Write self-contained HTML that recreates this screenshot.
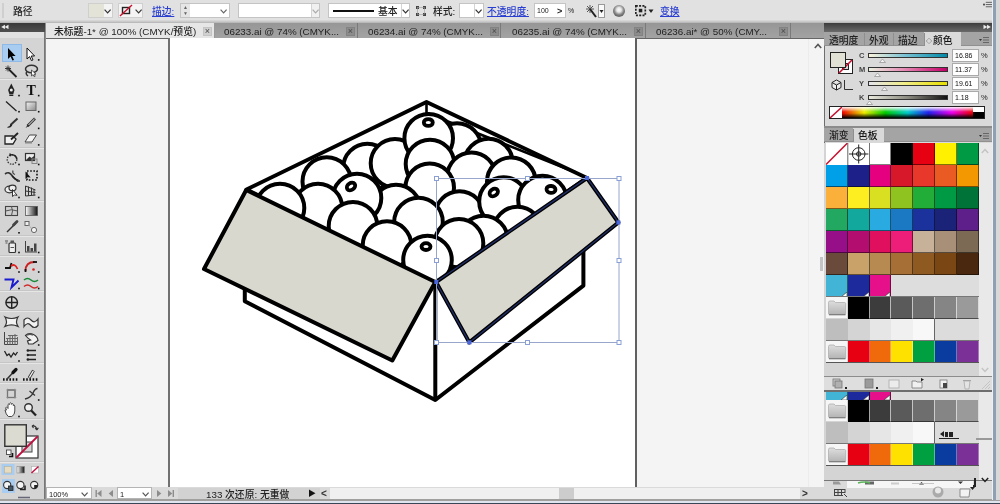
<!DOCTYPE html><html><head><meta charset="utf-8"><title>Illustrator</title><style>
*{box-sizing:border-box;margin:0;padding:0}
html,body{width:1000px;height:504px;overflow:hidden;background:#d4d4d4}
.t,.x,.tab span{will-change:transform}
body{position:relative;font-family:"Liberation Sans","Noto Sans CJK SC",sans-serif;font-size:11px;color:#222;font-weight:500}
.a{position:absolute}
.t{position:absolute;white-space:nowrap;line-height:1}
.lnk{color:#2a3fd0;text-decoration:underline}
.box{position:absolute;background:#fff;border:1px solid #c4c4c4}
.tab{position:absolute;top:23px;height:15px;background:linear-gradient(#969696,#a3a3a3);border-right:1px solid #7a7a7a;color:#222;font-size:9.8px;line-height:18px;white-space:nowrap}
.tab span{position:absolute;top:0}
.x{position:absolute;top:4px;font-weight:400;width:9px;height:9px;background:#8c8c8c;border:1px solid #828282;font-size:9px;line-height:7px;text-align:center;color:#4a4a4a}
.sw{position:absolute;width:22px;height:22px;border:1px solid rgba(0,0,0,.55)}
</style></head><body>
<div class="a" style="left:0;top:0;width:1000px;height:21px;background:#e1e1e1"></div>
<div class="a" style="left:0;top:20px;width:1000px;height:4px;background:linear-gradient(#dcdcdc,#c4c4c4 50%,#9c9c9c)"></div>
<div class="a" style="left:2px;top:3px;width:2px;height:15px;background:#cfcfcf"></div>
<div class="t" style="left:13px;top:7px;font-size:9.8px;color:#222">路径</div>
<div class="box" style="left:88px;top:3px;width:25px;height:15px;border-color:#cfcfcf;background:#f4f4f4"></div>
<div class="a" style="left:89px;top:4px;width:15px;height:13px;background:#e3e3d8"></div>
<svg class="a" style="left:104.4px;top:8.8px" width="8" height="5"><path d="M0.6 0.6 L3.6 3.8 L6.6 0.6" fill="none" stroke="#333" stroke-width="1.2"/></svg>
<div class="box" style="left:118px;top:3px;width:25px;height:15px;border-color:#cfcfcf;background:#f4f4f4"></div>
<svg class="a" style="left:119px;top:4px" width="15" height="13"><rect x="3.5" y="3.5" width="7" height="6" fill="none" stroke="#222" stroke-width="1.4"/><line x1="1" y1="12" x2="13" y2="1" stroke="#c8102e" stroke-width="1.4"/></svg>
<svg class="a" style="left:134.6px;top:8.8px" width="8" height="5"><path d="M0.6 0.6 L3.6 3.8 L6.6 0.6" fill="none" stroke="#333" stroke-width="1.2"/></svg>
<div class="t lnk" style="left:152px;top:6.5px;font-size:9.8px">描边:</div>
<div class="box" style="left:180px;top:3px;width:50px;height:15px"></div>
<div class="a" style="left:181px;top:4px;width:9px;height:13px;background:#e6e6e6"></div>
<div class="t" style="left:183px;top:4px;font-size:5px;line-height:6px;color:#666">&#9650;<br>&#9660;</div>
<svg class="a" style="left:220.1px;top:8.8px" width="8" height="5"><path d="M0.6 0.6 L3.6 3.8 L6.6 0.6" fill="none" stroke="#666" stroke-width="1.2"/></svg>
<div class="box" style="left:238px;top:3px;width:82px;height:15px"></div>
<div class="a" style="left:311px;top:4px;width:8px;height:13px;background:#f0f0f0;border-left:1px solid #d4d4d4"></div>
<svg class="a" style="left:311.9px;top:8.8px" width="8" height="5"><path d="M0.6 0.6 L3.6 3.8 L6.6 0.6" fill="none" stroke="#aaa" stroke-width="1.2"/></svg>
<div class="box" style="left:328px;top:3px;width:82px;height:15px"></div>
<div class="a" style="left:333px;top:10px;width:41px;height:2px;background:#111"></div>
<div class="t" style="left:378px;top:6.5px;font-size:9.8px">基本</div>
<div class="a" style="left:401px;top:4px;width:1px;height:13px;background:#d4d4d4"></div>
<svg class="a" style="left:401.9px;top:8.8px" width="8" height="5"><path d="M0.6 0.6 L3.6 3.8 L6.6 0.6" fill="none" stroke="#333" stroke-width="1.2"/></svg>
<svg class="a" style="left:416px;top:6px" width="10" height="10"><g fill="#444"><rect x="0" y="0" width="3" height="3"/><rect x="7" y="0" width="3" height="3"/><rect x="0" y="7" width="3" height="3"/><rect x="7" y="7" width="3" height="3"/></g><rect x="1.5" y="1.5" width="7" height="7" fill="none" stroke="#999" stroke-width=".6"/></svg>
<div class="t" style="left:433px;top:6.5px;font-size:9.8px">样式:</div>
<div class="box" style="left:459px;top:3px;width:25px;height:15px"></div>
<div class="a" style="left:474px;top:4px;width:1px;height:13px;background:#d4d4d4"></div>
<svg class="a" style="left:475.1px;top:8.8px" width="8" height="5"><path d="M0.6 0.6 L3.6 3.8 L6.6 0.6" fill="none" stroke="#333" stroke-width="1.2"/></svg>
<div class="t lnk" style="left:487px;top:6.5px;font-size:9.8px">不透明度:</div>
<div class="box" style="left:534px;top:3px;width:32px;height:15px"></div>
<div class="t" style="left:537px;top:7px;font-size:7px">100</div>
<div class="t" style="left:557px;top:6.5px;font-size:9px;font-weight:bold">&gt;</div>
<div class="t" style="left:568px;top:7px;font-size:7px">%</div>
<svg class="a" style="left:584px;top:3px" width="22" height="16"><g stroke="#555" stroke-width="1"><line x1="6" y1="2" x2="6" y2="10"/><line x1="2" y1="6" x2="10" y2="6"/><line x1="3" y1="3" x2="9" y2="9"/><line x1="9" y1="3" x2="3" y2="9"/></g><line x1="6" y1="6" x2="12" y2="14" stroke="#222" stroke-width="2"/><rect x="14.5" y="1.5" width="6" height="13" fill="#fafafa" stroke="#999"/><path d="M15.5 7 h4 l-2 3z" fill="#222"/></svg>
<div class="a" style="left:613px;top:5px;width:12px;height:12px;border-radius:6px;background:radial-gradient(circle at 50% 40%,#fafafa 0,#e4e4e4 25%,#8a8a8a 50%,#666 68%,#b4b4b4 100%)"></div>
<svg class="a" style="left:635px;top:5px" width="22" height="12"><rect x="0.8" y="0.8" width="9.500" height="9.500" fill="#ddd" stroke="#222" stroke-dasharray="2 1.300" stroke-width="1.700"/><rect x="3.800" y="3.800" width="3.500" height="3.500" fill="#222"/><path d="M13.5 4.5 h5 l-2.5 3.5z" fill="#222"/></svg>
<div class="t lnk" style="left:660px;top:6.5px;font-size:9.8px">变换</div>
<svg class="a" style="left:983px;top:1px" width="10" height="8" viewBox="0 0 11 9"><rect x="0" y="3" width="2" height="2" fill="#444"/><g stroke="#555" stroke-width="1"><line x1="3" y1="1.5" x2="10" y2="1.5"/><line x1="3" y1="4" x2="10" y2="4"/><line x1="3" y1="6.5" x2="10" y2="6.5"/></g></svg>
<div class="a" style="left:45px;top:23px;width:779px;height:16px;background:linear-gradient(#969696,#a3a3a3);border-bottom:1px solid #666"></div>
<div class="tab" style="left:46px;width:169px;background:#e6e6e6;height:15px;color:#222;border-right:1px solid #999;"><span style="left:8px">未标题-1* @ 100% (CMYK/预览)</span><div class="x" style="left:157px;background:#d0d0d0;border-color:#c4c4c4;">&#215;</div></div>
<div class="tab" style="left:215px;width:143px;"><span style="left:9px">06233.ai @ 74% (CMYK...</span><div class="x" style="left:131px;">&#215;</div></div>
<div class="tab" style="left:358px;width:143px;"><span style="left:10px">06234.ai @ 74% (CMYK...</span><div class="x" style="left:132px;">&#215;</div></div>
<div class="tab" style="left:501px;width:145px;"><span style="left:11px">06235.ai @ 74% (CMYK...</span><div class="x" style="left:133px;">&#215;</div></div>
<div class="tab" style="left:646px;width:145px;"><span style="left:10px">06236.ai* @ 50% (CMY...</span><div class="x" style="left:133px;">&#215;</div></div>
<div class="a" style="left:46px;top:39px;width:762px;height:448px;background:#f4f4f4"></div>
<div class="a" style="left:168px;top:38px;width:469px;height:449px;background:#fff;border-left:2px solid #707070;border-right:2px solid #606060"></div>
<div class="a" style="left:808px;top:39px;width:16px;height:448px;background:#f4f4f4;border-left:1px solid #ececec"></div>
<svg class="a" style="left:813.500px;top:43px" width="8" height="6"><path d="M0.800 5 L4 1.500 L7.200 5" fill="none" stroke="#555" stroke-width="1.600"/></svg>
<div class="a" style="left:820px;top:257px;width:3px;height:14px;background:#c4c4c4"></div>
<svg class="a" style="left:0;top:0" width="1000" height="504" viewBox="0 0 1000 504">
<g fill="none" stroke="#000" stroke-width="4.0" stroke-linejoin="round" stroke-linecap="butt">
<path d="M246.5 189.5 L426.5 102 L587 178 L435 283 Z" fill="#fff"/>
<path d="M426.5 102 V113 L576 172.5" stroke-width="2.6"/>
<path d="M244.8 286 V301.3 L435.3 400 L583.4 285.6 V250 L435 283 Z" fill="#fff"/>
<g fill="#fff">
<circle cx="457" cy="147.5" r="24.3"/>
<circle cx="367.4" cy="168" r="24.3"/>
<circle cx="395" cy="163.3" r="24.3"/>
<circle cx="428.7" cy="138.2" r="24.3"/>
<ellipse cx="428.3" cy="122.5" rx="4.5" ry="3.4" stroke-width="3.8" transform="rotate(0 428.3 122.5)"/>
<circle cx="430" cy="164" r="24.3"/>
<circle cx="488.5" cy="163" r="24.3"/>
<circle cx="471.5" cy="176.8" r="24.3"/>
<circle cx="511.3" cy="181.7" r="24.3"/>
<circle cx="326.8" cy="181.6" r="24.3"/>
<circle cx="429.7" cy="187.8" r="24.3"/>
<circle cx="396" cy="209" r="24.3"/>
<circle cx="357" cy="198" r="24.3"/>
<ellipse cx="351" cy="186.5" rx="4.5" ry="3.4" stroke-width="3.8" transform="rotate(-35 351 186.5)"/>
<circle cx="318" cy="208" r="24.3"/>
<circle cx="280" cy="208" r="24.3"/>
<circle cx="459.5" cy="215.5" r="24.3"/>
<circle cx="503.5" cy="201.5" r="24.3"/>
<ellipse cx="493.75" cy="192.5" rx="4.5" ry="3.4" stroke-width="3.8" transform="rotate(-35 493.75 192.5)"/>
<circle cx="542.5" cy="200" r="24.3"/>
<ellipse cx="551" cy="189.4" rx="4.5" ry="3.4" stroke-width="3.8" transform="rotate(5 551 189.4)"/>
<circle cx="418.5" cy="222" r="24.3"/>
<circle cx="353" cy="226.2" r="24.3"/>
<circle cx="517.5" cy="231" r="24.3"/>
<circle cx="483.5" cy="240" r="24.3"/>
<circle cx="459" cy="243.3" r="24.3"/>
<circle cx="387" cy="245.5" r="24.3"/>
<circle cx="427.5" cy="260" r="24.3"/>
<ellipse cx="426" cy="246.6" rx="4.5" ry="3.4" stroke-width="3.8" transform="rotate(0 426 246.6)"/>
</g>
<path d="M435.3 283 V400"/>
<path d="M246.2 190 L435.3 282 L392.3 360.5 L204 269 Z" fill="#d9d8ce"/>
<path d="M436 282 L587 178 L618.4 222.5 L469.3 342.4 Z" fill="#d9d8ce"/>
</g>
<g fill="none" stroke="#98a6cc" stroke-width="1">
<path d="M436 282 L587 178 L618.4 222.5 L469.3 342.4 Z" stroke="#2c3f8c" stroke-width="1.3" stroke-opacity=".75"/>
<rect x="436.5" y="178.5" width="182.5" height="164" stroke="#98a6cc"/>
</g>
<g fill="#fff" stroke="#8a9fd6" stroke-width="1">
<rect x="434.5" y="176.5" width="4" height="4"/>
<rect x="525.5" y="176.5" width="4" height="4"/>
<rect x="617" y="176.5" width="4" height="4"/>
<rect x="434.5" y="258.5" width="4" height="4"/>
<rect x="617" y="258.5" width="4" height="4"/>
<rect x="434.5" y="340.5" width="4" height="4"/>
<rect x="525.5" y="340.5" width="4" height="4"/>
<rect x="617" y="340.5" width="4" height="4"/>
</g>
<g fill="#4a66dc">
<rect x="434.3" y="280" width="4" height="4"/>
<rect x="585" y="176" width="4" height="4"/>
<rect x="616.4" y="220.5" width="4" height="4"/>
<rect x="467.3" y="340.4" width="4" height="4"/>
</g>
</svg>
<div class="a" style="left:46px;top:487px;width:778px;height:12px;background:#dadada"></div>
<div class="box" style="left:46px;top:487px;width:46px;height:12px;border-color:#b4b4b4"></div>
<div class="t" style="left:49px;top:491px;font-size:7.5px">100%</div>
<svg class="a" style="left:81.4px;top:492.3px" width="8" height="5"><path d="M0.6 0.6 L3.6 3.8 L6.6 0.6" fill="none" stroke="#555" stroke-width="1.2"/></svg>
<svg class="a" style="left:92px;top:488px" width="86" height="11"><g fill="#8c8c8c"><rect x="3.500" y="2" width="1.400" height="7"/><path d="M9.500 2 v7 l-4.300 -3.500z"/><path d="M21 2 v7 l-4.300 -3.500z"/><path d="M65 2 v7 l4.300 -3.500z"/><path d="M76 2 v7 l4.300 -3.500z"/><rect x="80.600" y="2" width="1.400" height="7"/></g></svg>
<div class="box" style="left:117px;top:487px;width:35px;height:12px;border-color:#b4b4b4"></div>
<div class="t" style="left:120px;top:491px;font-size:7.5px">1</div>
<svg class="a" style="left:142.4px;top:492.3px" width="8" height="5"><path d="M0.6 0.6 L3.6 3.8 L6.6 0.6" fill="none" stroke="#555" stroke-width="1.2"/></svg>
<div class="a" style="left:178px;top:488px;width:142px;height:11px;background:#d2d2d2"></div>
<div class="t" style="left:206px;top:489.5px;font-size:9.8px;color:#222;z-index:5">133 次还原: 无重做</div>
<div class="t" style="left:308px;top:490px;font-size:8px;color:#111">&#9654;</div>
<div class="t" style="left:321px;top:489px;font-size:10px;color:#333;font-weight:bold">&lt;</div>
<div class="a" style="left:330px;top:488px;width:470px;height:11px;background:#f0f0f0"></div>
<div class="a" style="left:559px;top:488px;width:15px;height:11px;background:#cdcdcd"></div>
<div class="t" style="left:802px;top:489px;font-size:10px;color:#333;font-weight:bold">&gt;</div>
<div class="a" style="left:0;top:24px;width:44px;height:476px;background:#d4d4d4"></div>
<div class="a" style="left:44px;top:23px;width:2px;height:477px;background:linear-gradient(90deg,#6a6a6a,#9a9a9a)"></div>
<div class="a" style="left:0;top:23px;width:45px;height:9px;background:linear-gradient(#3a3a3a,#505050)"></div>
<div class="t" style="left:1px;top:25px;font-size:4.5px;color:#eee;letter-spacing:-1px">&#9664;&#9664;</div>
<div class="a" style="left:0;top:32px;width:44px;height:6px;background:#e2e2e2"></div>
<div class="a" style="left:2px;top:44px;width:20px;height:18px;background:#a9cdf0;border:1px solid #8fb9e6"></div>
<div class="a" style="left:0;top:79px;width:44px;height:1px;background:#e6e6e6"></div>
<div class="a" style="left:0;top:78px;width:44px;height:1px;background:#c6c6c6"></div>
<div class="a" style="left:0;top:148px;width:44px;height:1px;background:#e6e6e6"></div>
<div class="a" style="left:0;top:147px;width:44px;height:1px;background:#c6c6c6"></div>
<div class="a" style="left:0;top:201px;width:44px;height:1px;background:#e6e6e6"></div>
<div class="a" style="left:0;top:200px;width:44px;height:1px;background:#c6c6c6"></div>
<div class="a" style="left:0;top:236px;width:44px;height:1px;background:#e6e6e6"></div>
<div class="a" style="left:0;top:235px;width:44px;height:1px;background:#c6c6c6"></div>
<div class="a" style="left:0;top:256px;width:44px;height:1px;background:#e6e6e6"></div>
<div class="a" style="left:0;top:255px;width:44px;height:1px;background:#c6c6c6"></div>
<div class="a" style="left:0;top:291px;width:44px;height:1px;background:#e6e6e6"></div>
<div class="a" style="left:0;top:290px;width:44px;height:1px;background:#c6c6c6"></div>
<div class="a" style="left:0;top:311px;width:44px;height:1px;background:#e6e6e6"></div>
<div class="a" style="left:0;top:310px;width:44px;height:1px;background:#c6c6c6"></div>
<div class="a" style="left:0;top:363px;width:44px;height:1px;background:#e6e6e6"></div>
<div class="a" style="left:0;top:362px;width:44px;height:1px;background:#c6c6c6"></div>
<div class="a" style="left:0;top:383px;width:44px;height:1px;background:#e6e6e6"></div>
<div class="a" style="left:0;top:382px;width:44px;height:1px;background:#c6c6c6"></div>
<div class="a" style="left:0;top:419px;width:44px;height:1px;background:#e6e6e6"></div>
<div class="a" style="left:0;top:418px;width:44px;height:1px;background:#c6c6c6"></div>
<div class="a" style="left:0;top:462px;width:44px;height:1px;background:#e6e6e6"></div>
<div class="a" style="left:0;top:461px;width:44px;height:1px;background:#c6c6c6"></div>
<svg class="a" style="left:0;top:0" width="46" height="504" viewBox="0 0 46 504">
<g fill="#111">
<rect x="37.9" y="59.1" width="1.6" height="1.6"/>
<rect x="18.2" y="94.8" width="1.6" height="1.6"/>
<rect x="37.9" y="94.8" width="1.6" height="1.6"/>
<rect x="18.2" y="110.9" width="1.6" height="1.6"/>
<rect x="37.9" y="110.9" width="1.6" height="1.6"/>
<rect x="37.9" y="127.6" width="1.6" height="1.6"/>
<rect x="37.9" y="144.1" width="1.6" height="1.6"/>
<rect x="18.2" y="163.7" width="1.6" height="1.6"/>
<rect x="37.9" y="163.7" width="1.6" height="1.6"/>
<rect x="18.2" y="180.2" width="1.6" height="1.6"/>
<rect x="18.2" y="196.7" width="1.6" height="1.6"/>
<rect x="37.9" y="196.7" width="1.6" height="1.6"/>
<rect x="18.2" y="232.0" width="1.6" height="1.6"/>
<rect x="18.2" y="251.7" width="1.6" height="1.6"/>
<rect x="37.9" y="251.7" width="1.6" height="1.6"/>
<rect x="18.2" y="271.2" width="1.6" height="1.6"/>
<rect x="37.9" y="271.2" width="1.6" height="1.6"/>
<rect x="18.2" y="287.7" width="1.6" height="1.6"/>
<rect x="37.9" y="287.7" width="1.6" height="1.6"/>
<rect x="37.9" y="344.2" width="1.6" height="1.6"/>
<rect x="18.2" y="360.2" width="1.6" height="1.6"/>
<rect x="37.9" y="399.2" width="1.6" height="1.6"/>
<rect x="18.2" y="415.7" width="1.6" height="1.6"/>
</g>
<path d="M8 48 L8 59 L10.6 56.6 L12.4 60.6 L14 59.9 L12.2 56 L15.6 56 Z" fill="#000"/>
<path d="M27 48 L27 59 L29.6 56.6 L31.4 60.6 L33 59.9 L31.2 56 L34.6 56 Z" fill="#fff" stroke="#111" stroke-width="1"/>
<g stroke="#333" stroke-width="1" fill="none"><path d="M8 65.500 v6 M5 68.500 h6 M6 66.500 l4 4 M10 66.500 l-4 4"/><path d="M9 69.500 L16.500 77" stroke-width="1.800" stroke="#222"/></g>
<g fill="none" stroke="#333" stroke-width="1.500"><ellipse cx="31.500" cy="69" rx="6" ry="3.800"/><path d="M27 71.500 q-2 2.500 1 4.500"/></g><path d="M31.500 70 v6 l1.500 -1.300 l1.200 2 l1 -0.500 l-1.200 -2 h2z" fill="#fff" stroke="#222" stroke-width=".7"/>
<path d="M11.300 83.500 L14.500 90 L13.300 94 H9.300 L8.100 90 Z" fill="#222"/><circle cx="11.300" cy="90" r="1.500" fill="#eee"/><rect x="9.300" y="94.500" width="4" height="1.500" fill="#222"/>
<text x="31.200" y="94.500" font-family="Liberation Serif,serif" font-weight="bold" font-size="14" text-anchor="middle" fill="#111">T</text>
<path d="M6 101.500 L16.500 111" stroke="#222" stroke-width="1.300"/>
<defs><linearGradient id="rg" x1="0" y1="0" x2="1" y2="1"><stop offset="0" stop-color="#f4f4f4"/><stop offset="1" stop-color="#8a8a8a"/></linearGradient><linearGradient id="gg" x1="0" y1="0" x2="1" y2="0"><stop offset="0" stop-color="#fff"/><stop offset="1" stop-color="#111"/></linearGradient></defs>
<rect x="26" y="102" width="10" height="8.500" fill="url(#rg)" stroke="#666" stroke-width="1"/>
<path d="M17.500 118.500 L10.500 125" stroke="#333" stroke-width="2"/><path d="M10.800 124 q-1 3 -4 3.300 q3 1.500 5.500 -1.800z" fill="#222"/>
<path d="M35 118.500 L27.500 126" stroke="#333" stroke-width="2.600"/><path d="M34.500 119 L27.800 125.700" stroke="#eee" stroke-width="1"/><path d="M28 124.500 l-2.500 3.500 l3.800 -2.200z" fill="#222"/>
<path d="M5 136 h8 l3 3 l-3 5 h-8z" fill="#f0f0f0" stroke="#222" stroke-width="1.300"/><path d="M18 133 L11 139.500" stroke="#222" stroke-width="1.800"/>
<path d="M29.500 135 h7 l-4.500 7 h-7z" fill="#f4f4f4" stroke="#444" stroke-width="1"/><path d="M25 142 h7 v1.500 h-7z" fill="#888"/>
<circle cx="12" cy="159.500" r="4.800" fill="none" stroke="#333" stroke-width="1.300" stroke-dasharray="1.500 1.200"/><path d="M12 154.700 a4.800 4.800 0 0 1 4.800 4.800" fill="none" stroke="#222" stroke-width="1.500"/><path d="M9.500 153 l3 1.700 l-2.600 2z" fill="#222"/>
<rect x="25.500" y="153.500" width="9" height="7" fill="#eee" stroke="#333" stroke-width="1.200"/><path d="M26 160 l3.500 -3.500 l2 1.500 l2.500 -2 v4z" fill="#333"/><rect x="32" y="159" width="5" height="4.500" fill="none" stroke="#888" stroke-width="1"/>
<path d="M5 174 q4 -3 7 1.500 t6.500 4.500" fill="none" stroke="#333" stroke-width="1.600"/><path d="M13 170.500 q-1 3 2 4" fill="none" stroke="#444" stroke-width="1.200"/><path d="M12 176 L18 181.500" stroke="#222" stroke-width="1.200"/>
<rect x="27" y="171" width="10" height="9" fill="none" stroke="#111" stroke-width="1.600" stroke-dasharray="1.600 1.600"/><path d="M25.500 171.500 v7.500 l2 -1.800 l3.200 0.200z" fill="#111"/>
<g fill="#eee" stroke="#333" stroke-width="1.200"><ellipse cx="9.500" cy="189.500" rx="4.500" ry="3.300"/><ellipse cx="12.500" cy="188" rx="3.500" ry="2.800"/></g><path d="M12.500 189.500 v7 l1.800 -1.500 l2.800 0.300z" fill="#fff" stroke="#222" stroke-width=".9"/>
<g fill="none" stroke="#333" stroke-width="1"><path d="M25.500 186 v10 M28.500 186.500 v9.500 M31.500 187.500 v8 M34 189 v6.500 M25.500 186 L35.500 190 M25.500 191 L35.500 192.500 M25.500 196 L35.500 195"/></g>
<rect x="5.500" y="206.500" width="12" height="9" fill="#cfcfcf" stroke="#444" stroke-width="1.100"/><path d="M5.500 211 q6 -2.500 12 0 M11.500 206.500 q2 4.500 0 9" fill="none" stroke="#555" stroke-width="1"/>
<rect x="25.500" y="206.500" width="12" height="9" fill="url(#gg)" stroke="#555" stroke-width=".8"/>
<path d="M15.500 223.500 L7 232" stroke="#333" stroke-width="1.500"/><path d="M17 221.500 L13.500 225" stroke="#444" stroke-width="2.800" stroke-linecap="round"/>
<rect x="25" y="221.500" width="4" height="4" fill="#eee" stroke="#666" stroke-width="1"/><circle cx="34" cy="230" r="2.600" fill="#f4f4f4" stroke="#666" stroke-width="1"/><path d="M28.500 225.500 L32 228.500" stroke="#999" stroke-width="1" stroke-dasharray="1 1"/>
<rect x="9" y="243" width="6.500" height="9.500" rx="1" fill="#eee" stroke="#333" stroke-width="1.200"/><rect x="10.500" y="240.500" width="3.500" height="2.500" fill="#555"/><path d="M5 241 h3 M5.500 243 h2" stroke="#555" stroke-width="1"/><path d="M10.500 247.500 h3.500" stroke="#555"/>
<g fill="#444"><rect x="25" y="241" width="1" height="11"/><rect x="25" y="251.500" width="12" height="1"/><rect x="27" y="246" width="2.500" height="5.500"/><rect x="30.500" y="248" width="2.500" height="3.500"/><rect x="34" y="243.500" width="2.500" height="8"/></g>
<path d="M5 268 h5 l1.500 -5" fill="none" stroke="#111" stroke-width="1.800"/><path d="M11 266 q4 -3 6.500 3" fill="none" stroke="#d22" stroke-width="1.800"/>
<path d="M25.500 271 q0 -9 9 -9" fill="none" stroke="#c22" stroke-width="1.800"/><path d="M33 262 h4" stroke="#111" stroke-width="1.800"/><path d="M25.500 269 v3" stroke="#111" stroke-width="1.800"/><circle cx="33.500" cy="269.500" r="1.300" fill="#d22"/>
<path d="M4.500 279.500 h9 l-2 8 l7 -7" fill="none" stroke="#1a1ad0" stroke-width="1.900"/>
<path d="M24 280 q3.500 -3 7 0 t7 0" fill="none" stroke="#1a8a3a" stroke-width="1.600"/><path d="M24 286.500 q3.500 -3 7 0 t7 0" fill="none" stroke="#d02a2a" stroke-width="1.600"/>
<g fill="none" stroke="#222" stroke-width="1.400"><circle cx="11.700" cy="302.500" r="5.800"/><path d="M5.900 302.500 h11.600 M11.700 296.700 v11.600"/></g>
<path d="M5 317 q6.500 3 13 0 q-3 4.700 0 9.400 q-6.500 -3 -13 0 q3 -4.700 0 -9.400z" fill="#f2f2f2" stroke="#333" stroke-width="1.200"/>
<path d="M24 320 q3.500 -4 7 0 t7 -1 v6.500 q-3.500 4 -7 0 t-7 1z" fill="#f2f2f2" stroke="#333" stroke-width="1.200"/>
<g stroke="#444" stroke-width="1" fill="none"><path d="M4.500 332 v12.500 h13"/><path d="M7.500 338 v6.500 M10 335 v9.500 M12.500 336 v8.500 M15 334 v10.500 M17.500 337 v7.500 M4.500 341.500 h13 M6 338.500 h11.500 M8 335.500 h9.500" stroke="#666"/></g>
<path d="M25.500 335.500 q3 -3 8 -1 q4 2 4.500 6 l-5 3.500 h-4.500 l-1 -3 l3 -1 q-3 -2 -5 -4.500z" fill="#f2f2f2" stroke="#333" stroke-width="1.200"/><path d="M27 335 q3 -1.500 6 0" stroke="#555" stroke-width="1.500" fill="none"/>
<path d="M4.500 351 l2.500 4.500 l2 -1.500 l2 3 l2.500 -4 l2 2 l2 -3" fill="none" stroke="#222" stroke-width="1.300"/>
<g stroke="#222" stroke-width="1.400"><path d="M28 350.500 h8 M28 355 h8 M28 359.500 h8"/></g><g fill="#222"><circle cx="27.800" cy="350.500" r="1.200"/><circle cx="27.800" cy="355" r="1.200"/><circle cx="27.800" cy="359.500" r="1.200"/></g>
<path d="M14.500 371 L7.500 378.500" stroke="#333" stroke-width="1.500"/><path d="M16 369.500 L13 372.500" stroke="#111" stroke-width="3.200" stroke-linecap="round"/><path d="M3 379.500 h15" stroke="#111" stroke-width="2.600" stroke-dasharray="1.600 1.600"/>
<path d="M33.500 370.500 L29 378" stroke="#333" stroke-width="3"/><path d="M33.300 371 L29.300 377.500" stroke="#f4f4f4" stroke-width="1.400"/><path d="M23 379.500 h15" stroke="#111" stroke-width="2.600" stroke-dasharray="1.600 1.600"/>
<rect x="7.500" y="390" width="7.500" height="7.500" fill="none" stroke="#444" stroke-width="1.200"/><path d="M6 390 h10.500 M6 397.500 h10.500 M7.500 388.500 v10.500 M15 388.500 v10.500" stroke="#999" stroke-width=".6"/>
<path d="M25 399 q6 -1.500 8 -6 t4.500 -4.500" fill="none" stroke="#333" stroke-width="1.400"/><path d="M29.500 391 L35 395.500" stroke="#333" stroke-width="1.200"/>
<path d="M6.500 410 q-2 -3 0 -3 l1.500 1.500 v-4 q1 -1.500 1.700 0 v-1 q1 -1.500 1.800 0 v0.800 q1 -1.300 1.800 0 v1.200 q1.200 -1 1.500 0.500 v5 q0 4 -3 5.500 h-3.500 q-2.500 -2 -3.300 -6.500z" fill="#fafafa" stroke="#444" stroke-width="1"/>
<circle cx="28.500" cy="407.500" r="3.800" fill="#f0f0f0" stroke="#333" stroke-width="1.400"/><path d="M31.300 410.500 L36 415.500" stroke="#222" stroke-width="2.200"/>
<rect x="16" y="436" width="22" height="22" fill="#fff" stroke="#333" stroke-width="1.200"/><rect x="22" y="442" width="10" height="10" fill="#d6d6d6" stroke="#444" stroke-width="1"/><path d="M16.500 457.500 L37.500 436.500" stroke="#c01040" stroke-width="1.800"/>
<rect x="4.800" y="424.800" width="21.500" height="21.500" fill="#dcdbd1" stroke="#333" stroke-width="1.400"/>
<path d="M32 426 q4 -1 5 4 M37 430 l-1.800 -1.800 M37 430 l1.300 -2.200 M32 426 l2 -1 M32 426 l1.500 2" fill="none" stroke="#333" stroke-width="1.200"/>
<rect x="6.500" y="450" width="4.500" height="4.500" fill="#fff" stroke="#333" stroke-width=".8"/><path d="M9 456.500 h3.500 v-3.500" fill="none" stroke="#111" stroke-width="1.600"/>
<rect x="1.500" y="464" width="13" height="11" fill="#a9cdf0"/>
<rect x="4.500" y="466.500" width="7" height="6.500" fill="#e8dcc0" stroke="#b8b8a8" stroke-width=".8"/>
<rect x="17" y="466.500" width="7.500" height="6.500" fill="url(#gg)" stroke="#888" stroke-width=".6"/>
<rect x="31.500" y="466.500" width="7" height="6.500" fill="#fff" stroke="#aaa" stroke-width=".6"/><path d="M31.500 473 L38.500 466.500" stroke="#c01040" stroke-width="1.400"/>
<rect x="2" y="479" width="13" height="14" fill="#a9cdf0"/>
<circle cx="7.2" cy="485" r="3.600" fill="#f4f4f4" stroke="#333" stroke-width="1.100"/>
<circle cx="20.4" cy="485" r="3.600" fill="#f4f4f4" stroke="#333" stroke-width="1.100"/>
<circle cx="34.2" cy="485" r="3.600" fill="#f4f4f4" stroke="#333" stroke-width="1.100"/>
<rect x="8.500" y="486" width="4.500" height="4.500" fill="#456" stroke="#222" stroke-width=".8"/>
<path d="M20 489.500 h5 v-4" fill="none" stroke="#222" stroke-width="1.600"/>
<path d="M34.200 485 h3.600 a3.600 3.600 0 0 1 -3.600 3.600z" fill="#222"/>
<path d="M18 497.500 h12" stroke="#667" stroke-width="1.500"/>
</svg>
<div class="a" style="left:824px;top:24px;width:168px;height:476px;background:#dadada"></div>
<div class="a" style="left:824px;top:23px;width:1px;height:477px;background:#6e6e6e"></div>
<div class="a" style="left:824px;top:23px;width:168px;height:9px;background:linear-gradient(#3c3c3c,#6a6a6a)"></div>
<div class="t" style="left:983px;top:25px;font-size:4.5px;color:#eee;letter-spacing:-1px">&#9654;&#9654;</div>
<div class="a" style="left:824px;top:32px;width:168px;height:14px;background:#a4a4a4;border-bottom:1px solid #909090"></div>
<div class="a" style="left:924px;top:32px;width:37px;height:15px;background:#dadada"></div>
<div class="a" style="left:864px;top:33px;width:1px;height:13px;background:#8f8f8f"></div>
<div class="a" style="left:893px;top:33px;width:1px;height:13px;background:#8f8f8f"></div>
<div class="a" style="left:924px;top:33px;width:1px;height:13px;background:#8f8f8f"></div>
<div class="t" style="left:829px;top:36px;font-size:9.8px;color:#222">透明度</div>
<div class="t" style="left:869px;top:36px;font-size:9.8px;color:#222">外观</div>
<div class="t" style="left:898px;top:36px;font-size:9.8px;color:#222">描边</div>
<div class="t" style="left:926px;top:38px;font-size:6px;color:#222">&#9671;</div>
<div class="t" style="left:933px;top:36px;font-size:9.8px;color:#111">颜色</div>
<svg class="a" style="left:979px;top:36px" width="11" height="8"><path d="M0 3 h3 l-1.5 2z" fill="#333"/><g stroke="#666" stroke-width="1"><line x1="4" y1="1.5" x2="10" y2="1.5"/><line x1="4" y1="4" x2="10" y2="4"/><line x1="4" y1="6.5" x2="10" y2="6.5"/></g></svg>
<div class="a" style="left:838px;top:59px;width:15px;height:15px;background:#fff;border:1px solid #222"></div>
<svg class="a" style="left:838px;top:59px" width="15" height="15"><rect x="4.5" y="4.5" width="6" height="6" fill="#d6d6d6" stroke="#222"/><line x1="1" y1="14" x2="14" y2="1" stroke="#c8102e" stroke-width="1.6"/></svg>
<div class="a" style="left:830px;top:52px;width:16px;height:16px;background:#e2e1d6;border:1px solid #222"></div>
<svg class="a" style="left:830px;top:79px" width="24" height="12"><path d="M2 3.5 L6.5 1 L11 3.5 V8.5 L6.5 11 L2 8.5 Z M2 3.5 L6.5 6 L11 3.5 M6.5 6 V11" fill="#eee" stroke="#222" stroke-width="1"/><path d="M14.5 1 V10.5 H23" fill="none" stroke="#333" stroke-width="1"/></svg>
<div class="t" style="left:859px;top:52px;font-size:7.5px;font-weight:bold;color:#444">C</div>
<div class="a" style="left:868px;top:53px;width:80px;height:5px;background:linear-gradient(90deg,#fbf3dc,#7cc3d4 45%,#0089a8);border:1px solid #333"></div>
<svg class="a" style="left:878px;top:58px" width="9" height="5"><path d="M1.500 4.500 L4.500 1 L7.500 4.500 Z" fill="#f4f4f4" stroke="#9a9a9a" stroke-width=".8"/></svg>
<div class="box" style="left:952px;top:49px;width:27px;height:13px;border-color:#aaa"></div>
<div class="t" style="left:955px;top:52px;font-size:7px;color:#111">16.86</div>
<div class="t" style="left:981px;top:52px;font-size:7.5px;color:#222">%</div>
<div class="t" style="left:859px;top:66px;font-size:7.5px;font-weight:bold;color:#444">M</div>
<div class="a" style="left:868px;top:67px;width:80px;height:5px;background:linear-gradient(90deg,#e9f0e0,#e58ab4 45%,#c4006a);border:1px solid #333"></div>
<svg class="a" style="left:873px;top:72px" width="9" height="5"><path d="M1.500 4.500 L4.500 1 L7.500 4.500 Z" fill="#f4f4f4" stroke="#9a9a9a" stroke-width=".8"/></svg>
<div class="box" style="left:952px;top:63px;width:27px;height:13px;border-color:#aaa"></div>
<div class="t" style="left:955px;top:66px;font-size:7px;color:#111">11.37</div>
<div class="t" style="left:981px;top:66px;font-size:7.5px;color:#222">%</div>
<div class="t" style="left:859px;top:80px;font-size:7.5px;font-weight:bold;color:#444">Y</div>
<div class="a" style="left:868px;top:81px;width:80px;height:5px;background:linear-gradient(90deg,#e4e4ee,#f1ee8a 45%,#e8e000);border:1px solid #333"></div>
<svg class="a" style="left:880px;top:86px" width="9" height="5"><path d="M1.500 4.500 L4.500 1 L7.500 4.500 Z" fill="#f4f4f4" stroke="#9a9a9a" stroke-width=".8"/></svg>
<div class="box" style="left:952px;top:77px;width:27px;height:13px;border-color:#aaa"></div>
<div class="t" style="left:955px;top:80px;font-size:7px;color:#111">19.61</div>
<div class="t" style="left:981px;top:80px;font-size:7.5px;color:#222">%</div>
<div class="t" style="left:859px;top:94px;font-size:7.5px;font-weight:bold;color:#444">K</div>
<div class="a" style="left:868px;top:95px;width:80px;height:5px;background:linear-gradient(90deg,#e8e8dc,#8a8a80 50%,#111);border:1px solid #333"></div>
<svg class="a" style="left:865px;top:100px" width="9" height="5"><path d="M1.500 4.500 L4.500 1 L7.500 4.500 Z" fill="#f4f4f4" stroke="#9a9a9a" stroke-width=".8"/></svg>
<div class="box" style="left:952px;top:91px;width:27px;height:13px;border-color:#aaa"></div>
<div class="t" style="left:955px;top:94px;font-size:7px;color:#111">1.18</div>
<div class="t" style="left:981px;top:94px;font-size:7.5px;color:#222">%</div>
<div class="a" style="left:829px;top:106px;width:156px;height:13px;background:#000;border:1px solid #222"></div>
<div class="a" style="left:842px;top:107px;width:131px;height:11px;background:linear-gradient(rgba(255,255,255,.95),rgba(255,255,255,0) 45%,rgba(0,0,0,0) 55%,rgba(0,0,0,1)),linear-gradient(90deg,#e00,#ee0 17%,#0c0 33%,#0cc 50%,#22e 66%,#e0e 84%,#e00)"></div>
<svg class="a" style="left:830px;top:107px" width="12" height="11"><rect width="12" height="11" fill="#fff"/><line x1="0" y1="11" x2="12" y2="0" stroke="#c8102e" stroke-width="1.5"/></svg>
<div class="a" style="left:973px;top:107px;width:11px;height:5px;background:#fff"></div>
<div class="a" style="left:824px;top:126px;width:168px;height:2px;background:#8c8c8c"></div>
<div class="a" style="left:824px;top:128px;width:168px;height:14px;background:#a4a4a4;border-bottom:1px solid #909090"></div>
<div class="a" style="left:853px;top:128px;width:31px;height:15px;background:#d9d9d9"></div>
<div class="a" style="left:853px;top:129px;width:1px;height:13px;background:#8f8f8f"></div>
<div class="t" style="left:829px;top:131px;font-size:9.8px;color:#222">渐变</div>
<div class="t" style="left:858px;top:131px;font-size:9.8px;color:#111">色板</div>
<svg class="a" style="left:979px;top:132px" width="11" height="8"><path d="M0 3 h3 l-1.5 2z" fill="#333"/><g stroke="#666" stroke-width="1"><line x1="4" y1="1.5" x2="10" y2="1.5"/><line x1="4" y1="4" x2="10" y2="4"/><line x1="4" y1="6.5" x2="10" y2="6.5"/></g></svg>
<div class="a" style="left:824px;top:143px;width:168px;height:233px;background:#d4d4d4"></div>
<div class="a" style="left:979px;top:143px;width:13px;height:233px;background:#e9e9e9"></div>
<svg class="a" style="left:981px;top:148px" width="8" height="6"><path d="M0.800 5 L4 1.500 L7.200 5" fill="none" stroke="#c4c4c4" stroke-width="1.400"/></svg>
<svg class="a" style="left:981px;top:367px" width="8" height="6"><path d="M0.800 1 L4 4.500 L7.200 1" fill="none" stroke="#c4c4c4" stroke-width="1.400"/></svg>
<div class="a" style="left:869.6px;top:143px;width:21.8px;height:22px;background:#ffffff;border:1px solid rgba(0,0,0,.5);border-width:0 1px 1px 0;"></div>
<div class="a" style="left:891.4px;top:143px;width:21.8px;height:22px;background:#000000;border:1px solid rgba(0,0,0,.5);border-width:0 1px 1px 0;"></div>
<div class="a" style="left:913.2px;top:143px;width:21.8px;height:22px;background:#e60012;border:1px solid rgba(0,0,0,.5);border-width:0 1px 1px 0;"></div>
<div class="a" style="left:935.0px;top:143px;width:21.8px;height:22px;background:#fff100;border:1px solid rgba(0,0,0,.5);border-width:0 1px 1px 0;"></div>
<div class="a" style="left:956.8px;top:143px;width:21.8px;height:22px;background:#009944;border:1px solid rgba(0,0,0,.5);border-width:0 1px 1px 0;"></div>
<div class="a" style="left:826.0px;top:165px;width:21.8px;height:22px;background:#00a0e9;border:1px solid rgba(0,0,0,.5);border-width:0 1px 1px 0;"></div>
<div class="a" style="left:847.8px;top:165px;width:21.8px;height:22px;background:#1d2088;border:1px solid rgba(0,0,0,.5);border-width:0 1px 1px 0;"></div>
<div class="a" style="left:869.6px;top:165px;width:21.8px;height:22px;background:#e4007f;border:1px solid rgba(0,0,0,.5);border-width:0 1px 1px 0;"></div>
<div class="a" style="left:891.4px;top:165px;width:21.8px;height:22px;background:#d7182a;border:1px solid rgba(0,0,0,.5);border-width:0 1px 1px 0;"></div>
<div class="a" style="left:913.2px;top:165px;width:21.8px;height:22px;background:#e8382b;border:1px solid rgba(0,0,0,.5);border-width:0 1px 1px 0;"></div>
<div class="a" style="left:935.0px;top:165px;width:21.8px;height:22px;background:#ea5b24;border:1px solid rgba(0,0,0,.5);border-width:0 1px 1px 0;"></div>
<div class="a" style="left:956.8px;top:165px;width:21.8px;height:22px;background:#f39800;border:1px solid rgba(0,0,0,.5);border-width:0 1px 1px 0;"></div>
<div class="a" style="left:826.0px;top:187px;width:21.8px;height:22px;background:#fbb03b;border:1px solid rgba(0,0,0,.5);border-width:0 1px 1px 0;"></div>
<div class="a" style="left:847.8px;top:187px;width:21.8px;height:22px;background:#fcee21;border:1px solid rgba(0,0,0,.5);border-width:0 1px 1px 0;"></div>
<div class="a" style="left:869.6px;top:187px;width:21.8px;height:22px;background:#d9e021;border:1px solid rgba(0,0,0,.5);border-width:0 1px 1px 0;"></div>
<div class="a" style="left:891.4px;top:187px;width:21.8px;height:22px;background:#8fc31f;border:1px solid rgba(0,0,0,.5);border-width:0 1px 1px 0;"></div>
<div class="a" style="left:913.2px;top:187px;width:21.8px;height:22px;background:#22ac38;border:1px solid rgba(0,0,0,.5);border-width:0 1px 1px 0;"></div>
<div class="a" style="left:935.0px;top:187px;width:21.8px;height:22px;background:#009a44;border:1px solid rgba(0,0,0,.5);border-width:0 1px 1px 0;"></div>
<div class="a" style="left:956.8px;top:187px;width:21.8px;height:22px;background:#007339;border:1px solid rgba(0,0,0,.5);border-width:0 1px 1px 0;"></div>
<div class="a" style="left:826.0px;top:209px;width:21.8px;height:22px;background:#22a861;border:1px solid rgba(0,0,0,.5);border-width:0 1px 1px 0;"></div>
<div class="a" style="left:847.8px;top:209px;width:21.8px;height:22px;background:#13a89e;border:1px solid rgba(0,0,0,.5);border-width:0 1px 1px 0;"></div>
<div class="a" style="left:869.6px;top:209px;width:21.8px;height:22px;background:#29abe2;border:1px solid rgba(0,0,0,.5);border-width:0 1px 1px 0;"></div>
<div class="a" style="left:891.4px;top:209px;width:21.8px;height:22px;background:#1b79c4;border:1px solid rgba(0,0,0,.5);border-width:0 1px 1px 0;"></div>
<div class="a" style="left:913.2px;top:209px;width:21.8px;height:22px;background:#1b319b;border:1px solid rgba(0,0,0,.5);border-width:0 1px 1px 0;"></div>
<div class="a" style="left:935.0px;top:209px;width:21.8px;height:22px;background:#1b2379;border:1px solid rgba(0,0,0,.5);border-width:0 1px 1px 0;"></div>
<div class="a" style="left:956.8px;top:209px;width:21.8px;height:22px;background:#5f1f8a;border:1px solid rgba(0,0,0,.5);border-width:0 1px 1px 0;"></div>
<div class="a" style="left:826.0px;top:231px;width:21.8px;height:22px;background:#960f88;border:1px solid rgba(0,0,0,.5);border-width:0 1px 1px 0;"></div>
<div class="a" style="left:847.8px;top:231px;width:21.8px;height:22px;background:#b30d6f;border:1px solid rgba(0,0,0,.5);border-width:0 1px 1px 0;"></div>
<div class="a" style="left:869.6px;top:231px;width:21.8px;height:22px;background:#e0105f;border:1px solid rgba(0,0,0,.5);border-width:0 1px 1px 0;"></div>
<div class="a" style="left:891.4px;top:231px;width:21.8px;height:22px;background:#ed1e79;border:1px solid rgba(0,0,0,.5);border-width:0 1px 1px 0;"></div>
<div class="a" style="left:913.2px;top:231px;width:21.8px;height:22px;background:#c7b299;border:1px solid rgba(0,0,0,.5);border-width:0 1px 1px 0;"></div>
<div class="a" style="left:935.0px;top:231px;width:21.8px;height:22px;background:#a89078;border:1px solid rgba(0,0,0,.5);border-width:0 1px 1px 0;"></div>
<div class="a" style="left:956.8px;top:231px;width:21.8px;height:22px;background:#7d6a55;border:1px solid rgba(0,0,0,.5);border-width:0 1px 1px 0;"></div>
<div class="a" style="left:826.0px;top:253px;width:21.8px;height:22px;background:#6a4a3a;border:1px solid rgba(0,0,0,.5);border-width:0 1px 1px 0;"></div>
<div class="a" style="left:847.8px;top:253px;width:21.8px;height:22px;background:#c9a26a;border:1px solid rgba(0,0,0,.5);border-width:0 1px 1px 0;"></div>
<div class="a" style="left:869.6px;top:253px;width:21.8px;height:22px;background:#b78a52;border:1px solid rgba(0,0,0,.5);border-width:0 1px 1px 0;"></div>
<div class="a" style="left:891.4px;top:253px;width:21.8px;height:22px;background:#a66f36;border:1px solid rgba(0,0,0,.5);border-width:0 1px 1px 0;"></div>
<div class="a" style="left:913.2px;top:253px;width:21.8px;height:22px;background:#8e5a22;border:1px solid rgba(0,0,0,.5);border-width:0 1px 1px 0;"></div>
<div class="a" style="left:935.0px;top:253px;width:21.8px;height:22px;background:#7a4614;border:1px solid rgba(0,0,0,.5);border-width:0 1px 1px 0;"></div>
<div class="a" style="left:956.8px;top:253px;width:21.8px;height:22px;background:#4a2810;border:1px solid rgba(0,0,0,.5);border-width:0 1px 1px 0;"></div>
<svg class="a" style="left:826px;top:143px" width="44" height="22"><rect width="44" height="22" fill="#fff"/><line x1="0" y1="21.5" x2="21.5" y2="0" stroke="#c8102e" stroke-width="1.5"/><line x1="21.8" y1="0" x2="21.8" y2="22" stroke="#666" stroke-width="1"/><g fill="none" stroke="#222" stroke-width="1"><circle cx="32.7" cy="11" r="6.3"/><circle cx="32.7" cy="11" r="2.2"/><line x1="23" y1="11" x2="42.4" y2="11"/><line x1="32.7" y1="1.5" x2="32.7" y2="20.5"/></g><line x1="43.6" y1="0" x2="43.6" y2="22" stroke="#666" stroke-width="1"/></svg>
<div class="a" style="left:826.0px;top:275px;width:21.8px;height:22px;background:#42b4d6;border-right:1px solid rgba(0,0,0,.5)"></div>
<svg class="a" style="left:840.8px;top:292px" width="6" height="5"><path d="M6 0 V5 H0 Z" fill="#fff" stroke="#333" stroke-width=".6"/></svg>
<div class="a" style="left:847.8px;top:275px;width:21.8px;height:22px;background:#1d2a9c;border-right:1px solid rgba(0,0,0,.5)"></div>
<svg class="a" style="left:862.6px;top:292px" width="6" height="5"><path d="M6 0 V5 H0 Z" fill="#fff" stroke="#333" stroke-width=".6"/></svg>
<div class="a" style="left:869.6px;top:275px;width:21.8px;height:22px;background:#e6108a;border-right:1px solid rgba(0,0,0,.5)"></div>
<svg class="a" style="left:884.4px;top:292px" width="6" height="5"><path d="M6 0 V5 H0 Z" fill="#fff" stroke="#333" stroke-width=".6"/></svg>
<div class="a" style="left:891.4px;top:275px;width:87.2px;height:22px;background:#dddddd"></div>
<div class="a" style="left:826px;top:296px;width:153px;height:1px;background:#777"></div>
<svg class="a" style="left:826.0px;top:297px" width="22" height="22"><defs><linearGradient id="fg" x1="0" y1="0" x2="0" y2="1"><stop offset="0" stop-color="#dedede"/><stop offset="1" stop-color="#b4b4b4"/></linearGradient></defs><rect width="21" height="21" fill="#f6f6f6"/><path d="M2.500 5.500 q0 -1.500 1.500 -1.500 h4 l1.500 1.500 h9 q1.200 0 1.200 1.200 v9.800 q0 1 -1 1 h-15.200 q-1 0 -1 -1z" fill="url(#fg)" stroke="#a8a8a8" stroke-width=".7"/><path d="M3 17.700 h16.500" stroke="#7a7a7a" stroke-width="1.200"/></svg>
<div class="a" style="left:847.8px;top:297px;width:21.8px;height:22px;background:#000;border:1px solid rgba(0,0,0,.5);border-width:0 1px 1px 0;border-right-color:rgba(255,255,255,.65);"></div>
<div class="a" style="left:869.6px;top:297px;width:21.8px;height:22px;background:#3c3c3c;border:1px solid rgba(0,0,0,.5);border-width:0 1px 1px 0;border-right-color:rgba(255,255,255,.65);"></div>
<div class="a" style="left:891.4px;top:297px;width:21.8px;height:22px;background:#5a5a5a;border:1px solid rgba(0,0,0,.5);border-width:0 1px 1px 0;border-right-color:rgba(255,255,255,.65);"></div>
<div class="a" style="left:913.2px;top:297px;width:21.8px;height:22px;background:#6e6e6e;border:1px solid rgba(0,0,0,.5);border-width:0 1px 1px 0;border-right-color:rgba(255,255,255,.65);"></div>
<div class="a" style="left:935.0px;top:297px;width:21.8px;height:22px;background:#858585;border:1px solid rgba(0,0,0,.5);border-width:0 1px 1px 0;border-right-color:rgba(255,255,255,.65);"></div>
<div class="a" style="left:956.8px;top:297px;width:21.8px;height:22px;background:#9a9a9a;border:1px solid rgba(0,0,0,.5);border-width:0 1px 1px 0;border-right-color:rgba(255,255,255,.65);"></div>
<div class="a" style="left:826.0px;top:319px;width:21.8px;height:22px;background:#bebebe"></div>
<div class="a" style="left:847.8px;top:319px;width:21.8px;height:22px;background:#d4d4d4"></div>
<div class="a" style="left:869.6px;top:319px;width:21.8px;height:22px;background:#e6e6e6"></div>
<div class="a" style="left:891.4px;top:319px;width:21.8px;height:22px;background:#f0f0f0"></div>
<div class="a" style="left:913.2px;top:319px;width:21.8px;height:22px;background:#f8f8f8"></div>
<div class="a" style="left:934.0px;top:319px;width:1px;height:22px;background:#666"></div>
<div class="a" style="left:935.0px;top:319px;width:43.6px;height:22px;background:#dcdcdc"></div>
<div class="a" style="left:826.0px;top:340px;width:152.6px;height:1px;background:#777"></div>
<svg class="a" style="left:826.0px;top:341px" width="22" height="22"><defs><linearGradient id="fg" x1="0" y1="0" x2="0" y2="1"><stop offset="0" stop-color="#dedede"/><stop offset="1" stop-color="#b4b4b4"/></linearGradient></defs><rect width="21" height="21" fill="#f6f6f6"/><path d="M2.500 5.500 q0 -1.500 1.500 -1.500 h4 l1.500 1.500 h9 q1.200 0 1.200 1.200 v9.800 q0 1 -1 1 h-15.200 q-1 0 -1 -1z" fill="url(#fg)" stroke="#a8a8a8" stroke-width=".7"/><path d="M3 17.700 h16.500" stroke="#7a7a7a" stroke-width="1.200"/></svg>
<div class="a" style="left:847.8px;top:341px;width:21.8px;height:22px;background:#e60012;border:1px solid rgba(0,0,0,.5);border-width:0 1px 1px 0;border-right-color:rgba(255,255,255,.35);"></div>
<div class="a" style="left:869.6px;top:341px;width:21.8px;height:22px;background:#f06a0c;border:1px solid rgba(0,0,0,.5);border-width:0 1px 1px 0;border-right-color:rgba(255,255,255,.35);"></div>
<div class="a" style="left:891.4px;top:341px;width:21.8px;height:22px;background:#ffe100;border:1px solid rgba(0,0,0,.5);border-width:0 1px 1px 0;border-right-color:rgba(255,255,255,.35);"></div>
<div class="a" style="left:913.2px;top:341px;width:21.8px;height:22px;background:#00a040;border:1px solid rgba(0,0,0,.5);border-width:0 1px 1px 0;border-right-color:rgba(255,255,255,.35);"></div>
<div class="a" style="left:935.0px;top:341px;width:21.8px;height:22px;background:#0a3ca0;border:1px solid rgba(0,0,0,.5);border-width:0 1px 1px 0;border-right-color:rgba(255,255,255,.35);"></div>
<div class="a" style="left:956.8px;top:341px;width:21.8px;height:22px;background:#7a3096;border:1px solid rgba(0,0,0,.5);border-width:0 1px 1px 0;border-right-color:rgba(255,255,255,.35);"></div>
<div class="a" style="left:826.0px;top:362px;width:152.6px;height:1px;background:#555"></div>
<div class="a" style="left:824px;top:376px;width:168px;height:14px;background:#dedede;border-top:1px solid #8c8c8c"></div>
<svg class="a" style="left:824px;top:377px" width="168" height="13"><g stroke="#777" stroke-width=".8"><rect x="9" y="2" width="7" height="7" fill="#c8c8c8"/><rect x="11" y="4" width="7" height="7" fill="#b0b0b0"/><rect x="41" y="2" width="8" height="9" fill="#9a9a9a"/><rect x="65" y="3" width="10" height="8" fill="#ececec" stroke="#aaa"/><path d="M88 4 h4 l1 1 h5 v6 h-10z" fill="#f0f0f0"/><rect x="116" y="3" width="7" height="8" fill="#f0f0f0"/><rect x="119" y="6" width="4" height="5" fill="#444" stroke="none"/><path d="M140 4 h6 l-1 8 h-4z" fill="#e4e4e4" stroke="#aaa"/><path d="M139 3.500 h8" stroke="#999"/></g><g fill="#222"><rect x="21" y="10" width="2" height="2"/><rect x="52" y="10" width="2" height="2"/><path d="M97 1 l3 1.500 l-3 2z"/></g><path d="M158 12 l8 -8 M161 12 l5 -5 M164 12 l2 -2" stroke="#c4c4c4" stroke-width="1"/></svg>
<div class="a" style="left:824px;top:390px;width:168px;height:2px;background:#6e6e6e"></div>
<div class="a" style="left:824px;top:392px;width:168px;height:88px;background:#d4d4d4"></div>
<div class="a" style="left:979px;top:392px;width:13px;height:88px;background:#e9e9e9"></div>
<div class="a" style="left:826.0px;top:392px;width:21.8px;height:8px;background:#42b4d6;border-right:1px solid rgba(0,0,0,.5)"></div>
<svg class="a" style="left:840.8px;top:395px" width="6" height="5"><path d="M6 0 V5 H0 Z" fill="#fff" stroke="#333" stroke-width=".6"/></svg>
<div class="a" style="left:847.8px;top:392px;width:21.8px;height:8px;background:#1d2a9c;border-right:1px solid rgba(0,0,0,.5)"></div>
<svg class="a" style="left:862.6px;top:395px" width="6" height="5"><path d="M6 0 V5 H0 Z" fill="#fff" stroke="#333" stroke-width=".6"/></svg>
<div class="a" style="left:869.6px;top:392px;width:21.8px;height:8px;background:#e6108a;border-right:1px solid rgba(0,0,0,.5)"></div>
<svg class="a" style="left:884.4px;top:395px" width="6" height="5"><path d="M6 0 V5 H0 Z" fill="#fff" stroke="#333" stroke-width=".6"/></svg>
<div class="a" style="left:891.4px;top:392px;width:87.2px;height:8px;background:#dddddd"></div>
<svg class="a" style="left:826.0px;top:400px" width="22" height="22"><defs><linearGradient id="fg" x1="0" y1="0" x2="0" y2="1"><stop offset="0" stop-color="#dedede"/><stop offset="1" stop-color="#b4b4b4"/></linearGradient></defs><rect width="21" height="21" fill="#f6f6f6"/><path d="M2.500 5.500 q0 -1.500 1.500 -1.500 h4 l1.500 1.500 h9 q1.200 0 1.200 1.200 v9.800 q0 1 -1 1 h-15.200 q-1 0 -1 -1z" fill="url(#fg)" stroke="#a8a8a8" stroke-width=".7"/><path d="M3 17.700 h16.500" stroke="#7a7a7a" stroke-width="1.200"/></svg>
<div class="a" style="left:847.8px;top:400px;width:21.8px;height:22px;background:#000;border:1px solid rgba(0,0,0,.5);border-width:0 1px 1px 0;border-right-color:rgba(255,255,255,.65);"></div>
<div class="a" style="left:869.6px;top:400px;width:21.8px;height:22px;background:#3c3c3c;border:1px solid rgba(0,0,0,.5);border-width:0 1px 1px 0;border-right-color:rgba(255,255,255,.65);"></div>
<div class="a" style="left:891.4px;top:400px;width:21.8px;height:22px;background:#5a5a5a;border:1px solid rgba(0,0,0,.5);border-width:0 1px 1px 0;border-right-color:rgba(255,255,255,.65);"></div>
<div class="a" style="left:913.2px;top:400px;width:21.8px;height:22px;background:#6e6e6e;border:1px solid rgba(0,0,0,.5);border-width:0 1px 1px 0;border-right-color:rgba(255,255,255,.65);"></div>
<div class="a" style="left:935.0px;top:400px;width:21.8px;height:22px;background:#858585;border:1px solid rgba(0,0,0,.5);border-width:0 1px 1px 0;border-right-color:rgba(255,255,255,.65);"></div>
<div class="a" style="left:956.8px;top:400px;width:21.8px;height:22px;background:#9a9a9a;border:1px solid rgba(0,0,0,.5);border-width:0 1px 1px 0;border-right-color:rgba(255,255,255,.65);"></div>
<div class="a" style="left:826.0px;top:422px;width:21.8px;height:22px;background:#bebebe"></div>
<div class="a" style="left:847.8px;top:422px;width:21.8px;height:22px;background:#d4d4d4"></div>
<div class="a" style="left:869.6px;top:422px;width:21.8px;height:22px;background:#e6e6e6"></div>
<div class="a" style="left:891.4px;top:422px;width:21.8px;height:22px;background:#f0f0f0"></div>
<div class="a" style="left:913.2px;top:422px;width:21.8px;height:22px;background:#f8f8f8"></div>
<div class="a" style="left:934.0px;top:422px;width:1px;height:22px;background:#666"></div>
<div class="a" style="left:935.0px;top:422px;width:43.6px;height:22px;background:#dcdcdc"></div>
<div class="a" style="left:826.0px;top:443px;width:152.6px;height:1px;background:#777"></div>
<svg class="a" style="left:826.0px;top:444px" width="22" height="22"><defs><linearGradient id="fg" x1="0" y1="0" x2="0" y2="1"><stop offset="0" stop-color="#dedede"/><stop offset="1" stop-color="#b4b4b4"/></linearGradient></defs><rect width="21" height="21" fill="#f6f6f6"/><path d="M2.500 5.500 q0 -1.500 1.500 -1.500 h4 l1.500 1.500 h9 q1.200 0 1.200 1.200 v9.800 q0 1 -1 1 h-15.200 q-1 0 -1 -1z" fill="url(#fg)" stroke="#a8a8a8" stroke-width=".7"/><path d="M3 17.700 h16.500" stroke="#7a7a7a" stroke-width="1.200"/></svg>
<div class="a" style="left:847.8px;top:444px;width:21.8px;height:22px;background:#e60012;border:1px solid rgba(0,0,0,.5);border-width:0 1px 1px 0;border-right-color:rgba(255,255,255,.35);"></div>
<div class="a" style="left:869.6px;top:444px;width:21.8px;height:22px;background:#f06a0c;border:1px solid rgba(0,0,0,.5);border-width:0 1px 1px 0;border-right-color:rgba(255,255,255,.35);"></div>
<div class="a" style="left:891.4px;top:444px;width:21.8px;height:22px;background:#ffe100;border:1px solid rgba(0,0,0,.5);border-width:0 1px 1px 0;border-right-color:rgba(255,255,255,.35);"></div>
<div class="a" style="left:913.2px;top:444px;width:21.8px;height:22px;background:#00a040;border:1px solid rgba(0,0,0,.5);border-width:0 1px 1px 0;border-right-color:rgba(255,255,255,.35);"></div>
<div class="a" style="left:935.0px;top:444px;width:21.8px;height:22px;background:#0a3ca0;border:1px solid rgba(0,0,0,.5);border-width:0 1px 1px 0;border-right-color:rgba(255,255,255,.35);"></div>
<div class="a" style="left:956.8px;top:444px;width:21.8px;height:22px;background:#7a3096;border:1px solid rgba(0,0,0,.5);border-width:0 1px 1px 0;border-right-color:rgba(255,255,255,.35);"></div>
<div class="a" style="left:826.0px;top:465px;width:152.6px;height:1px;background:#555"></div>
<svg class="a" style="left:938px;top:430px" width="22" height="10"><path d="M2 4 L6 1 V7 Z M7 2 h3 v5 h-3z M11 2 h4 v5 h-4z" fill="#222"/><line x1="1" y1="8.5" x2="21" y2="8.5" stroke="#222" stroke-width="1"/></svg>
<div class="a" style="left:976px;top:438px;width:16px;height:2px;background:#999"></div>
<svg class="a" style="left:980.500px;top:477px;z-index:3" width="8" height="6"><path d="M0.800 1 L4 4.500 L7.200 1" fill="none" stroke="#222" stroke-width="1.500"/></svg>
<div class="a" style="left:824px;top:480px;width:168px;height:1px;background:#777"></div>
<div class="a" style="left:824px;top:481px;width:168px;height:18px;background:#dadada"></div>
<div class="a" style="left:847px;top:481px;width:126px;height:7px;background:#f6f6f6"></div>
<svg class="a" style="left:824px;top:480px" width="168" height="8"><g fill="#777"><path d="M9 1.500 h6 l2 3 h-8z" fill="#999"/><rect x="41" y="1.500" width="9" height="3" fill="#666"/><path d="M67 2.500 h8 v2 h-8z" fill="#ccc"/><path d="M95 4.500 l2.500 -2.500 l2.500 2.500z" fill="#333"/><path d="M88 3.500 h22" stroke="#bbb" stroke-width=".8"/><path d="M134 1.500 h5 l-2.500 2.500z" fill="#333"/></g></svg>
<div class="a" style="left:973px;top:478px;width:3px;height:9px;border:1px solid #222;border-width:0 2px 2px 0"></div>
<svg class="a" style="left:824px;top:481px" width="168" height="18"><g stroke="#444" stroke-width="1" fill="none"><path d="M10 8.5 h11 M10 11.5 h11 M10 14.5 h9 M10.5 8 v7 M14 8 v7 M17.500 8 v7 M21 8 v4"/><path d="M20 13 l3 3"/></g><circle cx="114" cy="11" r="5.5" fill="#aaa"/><circle cx="114" cy="9.500" r="3" fill="#e8e8e8"/><path d="M136 8 h10 l-1 8 h-9z" fill="#f2f2f2" stroke="#777" stroke-width=".8"/><path d="M146 6 h5 l-2.5 3z" fill="#222"/><path d="M34 2 q6 -2 12 0" stroke="#5ab45a" stroke-width="1.6" fill="none"/></svg>
<div class="a" style="left:0;top:499px;width:1000px;height:5px;background:linear-gradient(#a29f9f 0,#a29f9f 30%,#dfe4ee 31%,#dfe4ee 75%,#3a4656 76%)"></div>
<div class="a" style="left:992px;top:0;width:1px;height:500px;background:#efefef"></div>
<div class="a" style="left:993px;top:0;width:3px;height:500px;background:#8fa0b4"></div>
<div class="a" style="left:996px;top:0;width:4px;height:500px;background:#d8d8d8"></div>
</body></html>
